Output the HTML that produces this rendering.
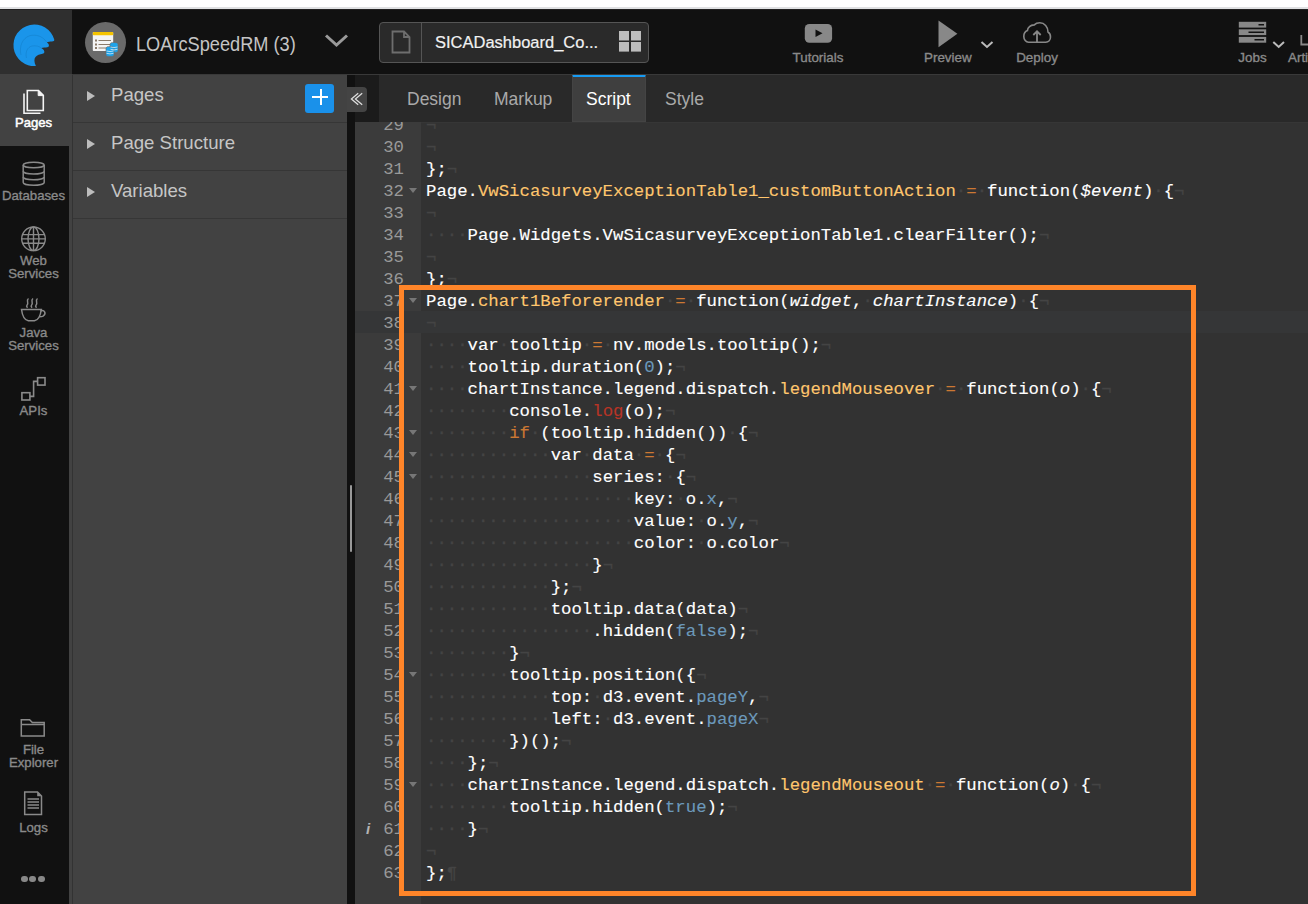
<!DOCTYPE html>
<html><head><meta charset="utf-8"><style>
*{box-sizing:border-box;margin:0;padding:0}
html,body{width:1308px;height:904px;overflow:hidden;background:#111;font-family:"Liberation Sans",sans-serif;position:relative}
.abs{position:absolute}
#topw{left:0;top:0;width:1308px;height:7px;background:#fff}
#topg{left:0;top:7px;width:1308px;height:2px;background:#e0e1e3}
#topd{left:0;top:9px;width:1308px;height:1px;background:#222}
#hdr{left:0;top:10px;width:1308px;height:64px;background:#111}
#logoarea{left:0;top:10px;width:72px;height:64px;background:#2f2f2f}
#nav{left:0;top:74px;width:69px;height:830px;background:#111}
#navstrip{left:69px;top:74px;width:3px;height:830px;background:#424242}
#navact{left:0;top:74px;width:72px;height:72px;background:#424242}
#navline{left:72px;top:74px;width:1px;height:830px;background:#333}
#panel{left:73px;top:74px;width:274px;height:830px;background:#424242}
.prow{position:absolute;left:73px;width:274px;height:48px}
.pdiv{position:absolute;left:73px;width:274px;height:1px;background:#363636}
.ptri{position:absolute;left:87px;width:0;height:0;border-left:8px solid #bdbdbd;border-top:5px solid transparent;border-bottom:5px solid transparent}
.ptxt{position:absolute;left:111px;color:#c6c6c6;font-size:18.6px;line-height:22px;white-space:nowrap}
#dstrip{left:347px;top:74px;width:8px;height:830px;background:#111}
#handle{left:350px;top:485px;width:2px;height:67px;background:#999;border-radius:1px}
#tabbar{left:355px;top:74px;width:953px;height:48px;background:#292929}
#tabdark{left:355px;top:74px;width:24px;height:48px;background:#1b1b1b}
#collapse{left:347px;top:87px;width:20px;height:25px;background:#444;border-radius:0 4px 4px 0}
.tab{position:absolute;top:75px;height:48px;font-size:19px;line-height:48px;color:#a9a9a9;transform:scaleX(0.921);transform-origin:0 50%;white-space:nowrap}
#tabact{left:572px;top:74px;width:74px;height:48px;background:#3f3f3f;border-top:3px solid #179bf3;border-left:1px solid #444;border-right:1px solid #444;border-bottom:1px solid #444}
#gutter{left:355px;top:122px;width:66px;height:782px;background:#3b3b3b;overflow:hidden}
#code{left:421px;top:122px;width:887px;height:782px;background:#323232;overflow:hidden}
#activeg{left:0;top:189px;width:66px;height:22px;background:#353637}
#activec{left:0;top:189px;width:887px;height:22px;background:#353637}
.lines{position:absolute;left:0;top:-122px;width:100%;height:904px}
.ln{position:absolute;left:5px;margin-top:2px;-webkit-text-stroke:0.12px currentColor;height:22px;line-height:22px;font-family:"Liberation Mono",monospace;font-size:17.32px;white-space:pre;color:#fff}
.gn{position:absolute;right:17px;margin-top:2px;height:22px;line-height:22px;font-family:"Liberation Mono",monospace;font-size:17.32px;color:#999;white-space:pre}
.fold{position:absolute;left:54px;width:0;height:0;margin-top:9px;border-top:5px solid #777;border-left:4px solid transparent;border-right:4px solid transparent}
.w{color:#fff}
.fn{color:#FFC66D}
.kw{color:#CC7833}
.c{color:#6C99BB}
.sf{color:#B83426}
.p{font-style:italic;color:#fff}
.inv{color:#444;-webkit-text-stroke:0.35px currentColor;position:relative;top:-1px}
#obox{left:399px;top:285px;width:797px;height:611px;border:5px solid #ff8529}

#appcirc{left:85px;top:22px;width:41px;height:41px;border-radius:50%;background:#6a6a6a}
#appname{left:136px;top:31px;font-size:19.4px;line-height:26px;color:#c4c4c4;transform:scaleX(0.938);transform-origin:0 50%;white-space:nowrap}
#filebox{left:379px;top:22px;width:270px;height:41px;border:1px solid #555;border-radius:4px;background:#2a2a2a}
#filediv{left:421px;top:23px;width:1px;height:39px;background:#555}
#filename{left:435px;top:29.5px;-webkit-text-stroke:0.2px currentColor;font-size:17.4px;line-height:24px;color:#f2f2f2;transform:scaleX(0.948);transform-origin:0 50%;white-space:nowrap}
.hlbl{top:49px;font-size:13.4px;line-height:18px;-webkit-text-stroke:0.35px currentColor;color:#8a8a8a;text-align:center;white-space:nowrap}

#plusbtn{left:305px;top:84px;width:29px;height:29px;border-radius:3px;background:#1a91ea}
.navlbl{left:0;width:67px;text-align:center;font-size:13.2px;-webkit-text-stroke:0.35px currentColor;line-height:16px;color:#8a8a8a;margin-top:0px;white-space:nowrap}
.dot{top:875.7px;width:6.8px;height:6.8px;border-radius:50%;background:#888}
.info{position:absolute;left:11px;font-family:"Liberation Sans",sans-serif;font-style:italic;font-weight:bold;font-size:15px;line-height:14px;color:#b4b4b4}
#codeline{left:421px;top:122px;width:887px;height:1px;background:#363636}
.eol{color:#444;-webkit-text-stroke:0.3px currentColor}

</style></head><body>
<div class="abs" id="topw"></div>
<div class="abs" id="topg"></div>
<div class="abs" id="topd"></div>
<div class="abs" id="hdr"></div>
<div class="abs" id="logoarea"></div>
<svg class="abs" style="left:0;top:10px" width="72" height="64" viewBox="0 10 72 64">
<path fill="#1a95ea" d="M35.9,66 A20.8,20.8 0 1 1 54.3,39.8 C54.4,41 53.5,41.3 52,41.4 C50,41.5 48,41.7 46.8,42.2 C48,43 48.9,44.2 48.9,45.5 C48.9,46.6 48.3,47.1 47.3,47.3 C45.5,47.6 43,47.7 41.3,48.1 C42.8,49 44,50 44.3,51.4 C44.5,52.8 43.8,53.4 42.5,53.8 C40,54.3 37,55.2 35.5,57 C34,58.8 34,62 35.9,66 Z"/>
<path d="M21,55 C19,47 22,38 30,35.6 C36,34.5 42,35.5 46.8,42.2 M26.5,58 C25,52 27.5,47 32,46 C36,45.5 39,46 41.3,48.1" fill="none" stroke="#0b5f9c" stroke-width="0.8" opacity="0.28"/>
</svg>
<div class="abs" id="appcirc"></div>
<svg class="abs" style="left:85px;top:22px" width="42" height="42" viewBox="85 22 42 42">
<rect x="92.8" y="32" width="20.4" height="19" rx="0.8" fill="#f4f4f4"/>
<rect x="92.8" y="32" width="20.4" height="3.3" rx="0.8" fill="#f5c400"/>
<rect x="95" y="39.5" width="2" height="2" fill="#8a7a6a"/><rect x="98.5" y="40" width="12.5" height="1" fill="#8a7a6a"/>
<rect x="95" y="43.5" width="2" height="2" fill="#8a7a6a"/><rect x="98.5" y="44" width="12.5" height="1" fill="#8a7a6a"/>
<rect x="95" y="47" width="2" height="2" fill="#8a7a6a"/><rect x="98.5" y="47.5" width="12.5" height="1" fill="#8a7a6a"/>
<g fill="#1ea3ea" stroke="#6a6a6a" stroke-width="0.6">
<path d="M110,44 a4,1.6 0 0 1 8,0 v7 a4,1.6 0 0 1 -8,0 z"/>
<path d="M106,48 a4,1.6 0 0 1 8,0 v7 a4,1.6 0 0 1 -8,0 z"/>
</g>
<g stroke="#e8f6ff" stroke-width="0.7" fill="none">
<path d="M110.5,47 q3.5,1.2 7,0 M110.5,49.3 q3.5,1.2 7,0"/>
<path d="M106.5,51 q3.5,1.2 7,0 M106.5,53.3 q3.5,1.2 7,0"/>
</g>
</svg>
<div class="abs" id="appname">LOArcSpeedRM (3)</div>
<svg class="abs" style="left:322px;top:30px" width="30" height="20" viewBox="322 30 30 20"><path d="M326,35.5 L336.5,45 L347,35.5" fill="none" stroke="#9a9a9a" stroke-width="3"/></svg>
<div class="abs" id="filebox"></div>
<div class="abs" id="filediv"></div>
<svg class="abs" style="left:388px;top:28px" width="26" height="30" viewBox="388 28 26 30"><path d="M392.5,31.5 H404 L409.5,37 V52.5 H392.5 Z M404,31.5 V37 H409.5" fill="none" stroke="#6e6e6e" stroke-width="1.8"/></svg>
<div class="abs" id="filename">SICADashboard_Co...</div>
<svg class="abs" style="left:615px;top:28px" width="30" height="28" viewBox="615 28 30 28"><g fill="#bdbdbd"><rect x="619" y="31" width="10" height="9.5"/><rect x="631" y="31" width="10" height="9.5"/><rect x="619" y="42" width="10" height="9.6"/><rect x="631" y="42" width="10" height="9.6"/></g></svg>
<svg class="abs" style="left:800px;top:20px" width="40" height="26" viewBox="800 20 40 26"><rect x="804.8" y="24" width="27.3" height="18.7" rx="4.5" fill="#888"/><path d="M815.5,29.5 L822.5,33.3 L815.5,37.1 Z" fill="#111"/></svg>
<div class="abs hlbl" style="left:792px;width:52px">Tutorials</div>
<svg class="abs" style="left:934px;top:18px" width="28" height="32" viewBox="934 18 28 32"><path d="M938.5,20.5 L957.4,33.8 L938.5,47.2 Z" fill="#888"/></svg>
<svg class="abs" style="left:978px;top:38px" width="18" height="13" viewBox="978 38 18 13"><path d="M981.5,42 L987,47 L992.5,42" fill="none" stroke="#bbb" stroke-width="2"/></svg>
<div class="abs hlbl" style="left:924px;width:47px">Preview</div>
<svg class="abs" style="left:1018px;top:18px" width="38" height="30" viewBox="1018 18 38 30"><path d="M1028.5,42.2 H1045.8 C1048.5,42.2 1050.5,39.8 1050.5,37 C1050.5,34.5 1049.5,32.8 1048,32 C1048,27 1044.5,22.8 1039.8,22.8 C1037.3,22.8 1035.5,23.6 1034.3,24.9 C1032.8,25 1030.8,25.5 1029.5,26.7 C1028.2,27.8 1027.5,29 1027.4,30.6 C1025,31.6 1023.8,33.8 1023.8,36.4 C1023.8,39.5 1026,42.2 1028.5,42.2 Z" fill="none" stroke="#888" stroke-width="1.6"/><path d="M1037,42.2 V31.5 M1033.3,35 L1037,31.3 L1040.7,35" fill="none" stroke="#888" stroke-width="1.8"/></svg>
<div class="abs hlbl" style="left:1016px;width:42px">Deploy</div>
<svg class="abs" style="left:1236px;top:18px" width="34" height="30" viewBox="1236 18 34 30"><g fill="#888"><rect x="1238.8" y="21.8" width="27.4" height="5.8"/><rect x="1238.8" y="29.3" width="27.4" height="5.8"/><rect x="1238.8" y="36.9" width="27.4" height="5.8"/></g><g fill="#111"><rect x="1258.5" y="24" width="5.5" height="1.5"/><rect x="1248.5" y="31.5" width="15.5" height="1.5"/><rect x="1254.5" y="39" width="9.5" height="1.5"/></g></svg>
<svg class="abs" style="left:1270px;top:38px" width="18" height="13" viewBox="1270 38 18 13"><path d="M1273.3,42 L1278.7,47 L1284,42" fill="none" stroke="#bbb" stroke-width="2"/></svg>
<div class="abs hlbl" style="left:1237px;width:31px">Jobs</div>
<svg class="abs" style="left:1296px;top:30px" width="12" height="20" viewBox="1296 30 12 20"><path d="M1301.3,35 V44.5 H1308" fill="none" stroke="#888" stroke-width="1.8"/></svg>
<div class="abs hlbl" style="left:1288px;text-align:left;width:60px">Artifacts</div>
<div class="abs" id="nav"></div>
<div class="abs" id="navstrip"></div>
<div class="abs" id="navact"></div>
<svg class="abs" style="left:15px;top:85px" width="40" height="32" viewBox="15 85 40 32"><path d="M24,93.5 V113.3 H40.5" fill="none" stroke="#f4f4f4" stroke-width="1.6"/><path d="M27.3,90.5 H38.5 L43.3,95.3 V110.5 H27.3 Z" fill="#424242" stroke="#f4f4f4" stroke-width="1.6"/><path d="M38.2,90.5 V95.6 H43.3" fill="#f4f4f4" stroke="#f4f4f4" stroke-width="1"/></svg>
<div class="abs navlbl" style="top:115px;color:#fff;font-size:13.1px;-webkit-text-stroke:0.5px #fff">Pages</div>
<svg class="abs" style="left:18px;top:158px" width="32" height="32" viewBox="18 158 32 32"><g fill="none" stroke="#8a8a8a" stroke-width="1.5"><ellipse cx="33.7" cy="165" rx="10.5" ry="2.8"/><path d="M23.2,165 V182.5 A10.5,2.8 0 0 0 44.2,182.5 V165"/><path d="M23.2,171.2 A10.5,2.8 0 0 0 44.2,171.2 M23.2,177 A10.5,2.8 0 0 0 44.2,177"/></g></svg>
<div class="abs navlbl" style="top:188px">Databases</div>
<svg class="abs" style="left:18px;top:223px" width="32" height="32" viewBox="18 223 32 32"><g fill="none" stroke="#8a8a8a" stroke-width="1.4"><circle cx="33.5" cy="238.8" r="11.8"/><ellipse cx="33.5" cy="238.8" rx="5.5" ry="11.8"/><path d="M33.5,227 V250.6 M22,234.6 H45 M21.7,238.9 H45.3 M22,243.3 H45"/></g></svg>
<div class="abs navlbl" style="top:253px">Web</div>
<div class="abs navlbl" style="top:266px">Services</div>
<svg class="abs" style="left:18px;top:295px" width="32" height="30" viewBox="18 295 32 30"><g fill="none" stroke="#8a8a8a" stroke-width="1.5"><path d="M21.5,309.5 H41.3 C40.5,315.5 38,320.2 34.5,320.8 H28.3 C24.8,320.2 22.3,315.5 21.5,309.5 Z"/><path d="M40.5,311 C44.5,309.5 46.5,313 43.5,315.8 C42.5,316.5 41,316.8 39.3,316.8"/><path d="M28.5,298.5 C25.5,300.5 29.5,303 27.0,305.3 C26.0,306.3 27.0,307.2 27.5,307.8 M33,298.5 C30,300.5 34,303 31.5,305.3 C30.5,306.3 31.5,307.2 32,307.8 M37.5,298.5 C34.5,300.5 38.5,303 36.0,305.3 C35.0,306.3 36.0,307.2 36.5,307.8"/></g></svg>
<div class="abs navlbl" style="top:324.5px">Java</div>
<div class="abs navlbl" style="top:338px">Services</div>
<svg class="abs" style="left:18px;top:373px" width="32" height="32" viewBox="18 373 32 32"><g fill="none" stroke="#8a8a8a" stroke-width="1.6"><rect x="21.9" y="392.7" width="8" height="7.3"/><rect x="37.6" y="377.7" width="7.4" height="7.4"/><path d="M29.9,396.4 H33.6 V381.4 H37.6"/></g></svg>
<div class="abs navlbl" style="top:403px">APIs</div>
<svg class="abs" style="left:18px;top:715px" width="32" height="26" viewBox="18 715 32 26"><g fill="none" stroke="#8a8a8a" stroke-width="1.5"><path d="M21.3,736 V719.7 H29.6 L32.3,722.5 H44.2 V736 Z M21.3,724.5 H44.2"/></g></svg>
<div class="abs navlbl" style="top:742px">File</div>
<div class="abs navlbl" style="top:755px">Explorer</div>
<svg class="abs" style="left:18px;top:788px" width="32" height="30" viewBox="18 788 32 30"><g fill="none" stroke="#8a8a8a" stroke-width="1.5"><path d="M24.7,792 H37.5 L41.5,796 V814.5 H24.7 Z"/><path d="M27.5,799 H39 M27.5,802 H39 M27.5,805 H39 M27.5,808 H39"/></g><path d="M37.2,792 V796.3 H41.5 Z" fill="#8a8a8a"/></svg>
<div class="abs navlbl" style="top:820px">Logs</div>
<div class="abs dot" style="left:20.8px"></div><div class="abs dot" style="left:29.3px"></div><div class="abs dot" style="left:37.8px"></div>

<div class="abs" id="navline"></div>
<div class="abs" id="panel"></div>
<div class="pdiv" style="top:122px"></div>
<div class="pdiv" style="top:170px"></div>
<div class="pdiv" style="top:218px"></div>
<div class="ptri" style="top:91px"></div>
<div class="ptri" style="top:139px"></div>
<div class="ptri" style="top:187px"></div>
<div class="ptxt" style="top:84px">Pages</div>
<div class="ptxt" style="top:132px">Page Structure</div>
<div class="ptxt" style="top:180px">Variables</div>
<div class="abs" id="plusbtn"></div>
<div class="abs" style="left:312px;top:96px;width:16px;height:2px;background:#fff"></div>
<div class="abs" style="left:319.5px;top:89px;width:2px;height:16px;background:#fff"></div>
<div class="abs" id="dstrip"></div>
<div class="abs" id="handle"></div>
<div class="abs" id="tabbar"></div>
<div class="abs" id="tabdark"></div>
<div class="abs" id="collapse"></div>
<svg class="abs" style="left:347px;top:87px" width="20" height="25" viewBox="347 87 20 25"><path d="M358.2,93.2 L351.4,99 L358.2,104.8 M362.2,93.2 L355.4,99 L362.2,104.8" fill="none" stroke="#e0e0e0" stroke-width="1.25"/></svg>
<div class="abs" id="tabact"></div>
<div class="tab" style="left:407px">Design</div>
<div class="tab" style="left:494px">Markup</div>
<div class="tab" style="left:586px;color:#fff">Script</div>
<div class="tab" style="left:665px">Style</div>
<div class="abs" id="gutter"><div class="abs" id="activeg"></div><div class="lines">
<div class="gn" style="top:113px">29</div>
<div class="gn" style="top:135px">30</div>
<div class="gn" style="top:157px">31</div>
<div class="gn" style="top:179px">32</div>
<div class="fold" style="top:179px"></div>
<div class="gn" style="top:201px">33</div>
<div class="gn" style="top:223px">34</div>
<div class="gn" style="top:245px">35</div>
<div class="gn" style="top:267px">36</div>
<div class="gn" style="top:289px">37</div>
<div class="fold" style="top:289px"></div>
<div class="gn" style="top:311px">38</div>
<div class="gn" style="top:333px">39</div>
<div class="gn" style="top:355px">40</div>
<div class="gn" style="top:377px">41</div>
<div class="fold" style="top:377px"></div>
<div class="gn" style="top:399px">42</div>
<div class="gn" style="top:421px">43</div>
<div class="fold" style="top:421px"></div>
<div class="gn" style="top:443px">44</div>
<div class="fold" style="top:443px"></div>
<div class="gn" style="top:465px">45</div>
<div class="fold" style="top:465px"></div>
<div class="gn" style="top:487px">46</div>
<div class="gn" style="top:509px">47</div>
<div class="gn" style="top:531px">48</div>
<div class="gn" style="top:553px">49</div>
<div class="gn" style="top:575px">50</div>
<div class="gn" style="top:597px">51</div>
<div class="gn" style="top:619px">52</div>
<div class="gn" style="top:641px">53</div>
<div class="gn" style="top:663px">54</div>
<div class="fold" style="top:663px"></div>
<div class="gn" style="top:685px">55</div>
<div class="gn" style="top:707px">56</div>
<div class="gn" style="top:729px">57</div>
<div class="gn" style="top:751px">58</div>
<div class="gn" style="top:773px">59</div>
<div class="fold" style="top:773px"></div>
<div class="gn" style="top:795px">60</div>
<div class="gn" style="top:817px">61</div>
<div class="gn" style="top:839px">62</div>
<div class="gn" style="top:861px">63</div>
<div class="info" style="top:821.5px">i</div>
</div></div>
<div class="abs" id="code"><div class="abs" id="activec"></div><div class="lines">
<div class="ln" style="top:113px"><span class="eol">¬</span></div>
<div class="ln" style="top:135px"><span class="eol">¬</span></div>
<div class="ln" style="top:157px"><span class="w">};</span><span class="eol">¬</span></div>
<div class="ln" style="top:179px"><span class="w">Page.</span><span class="fn">VwSicasurveyExceptionTable1_customButtonAction</span><span class="inv">·</span><span class="kw">=</span><span class="inv">·</span><span class="w">function(</span><span class="p">$event</span><span class="w">)</span><span class="inv">·</span><span class="w">{</span><span class="eol">¬</span></div>
<div class="ln" style="top:201px"><span class="eol">¬</span></div>
<div class="ln" style="top:223px"><span class="inv">·</span><span class="inv">·</span><span class="inv">·</span><span class="inv">·</span><span class="w">Page.Widgets.VwSicasurveyExceptionTable1.clearFilter();</span><span class="eol">¬</span></div>
<div class="ln" style="top:245px"><span class="eol">¬</span></div>
<div class="ln" style="top:267px"><span class="w">};</span><span class="eol">¬</span></div>
<div class="ln" style="top:289px"><span class="w">Page.</span><span class="fn">chart1Beforerender</span><span class="inv">·</span><span class="kw">=</span><span class="inv">·</span><span class="w">function(</span><span class="p">widget</span><span class="w">,</span><span class="inv">·</span><span class="p">chartInstance</span><span class="w">)</span><span class="inv">·</span><span class="w">{</span><span class="eol">¬</span></div>
<div class="ln" style="top:311px"><span class="eol">¬</span></div>
<div class="ln" style="top:333px"><span class="inv">·</span><span class="inv">·</span><span class="inv">·</span><span class="inv">·</span><span class="w">var</span><span class="inv">·</span><span class="w">tooltip</span><span class="inv">·</span><span class="kw">=</span><span class="inv">·</span><span class="w">nv.models.tooltip();</span><span class="eol">¬</span></div>
<div class="ln" style="top:355px"><span class="inv">·</span><span class="inv">·</span><span class="inv">·</span><span class="inv">·</span><span class="w">tooltip.duration(</span><span class="c">0</span><span class="w">);</span><span class="eol">¬</span></div>
<div class="ln" style="top:377px"><span class="inv">·</span><span class="inv">·</span><span class="inv">·</span><span class="inv">·</span><span class="w">chartInstance.legend.dispatch.</span><span class="fn">legendMouseover</span><span class="inv">·</span><span class="kw">=</span><span class="inv">·</span><span class="w">function(</span><span class="p">o</span><span class="w">)</span><span class="inv">·</span><span class="w">{</span><span class="eol">¬</span></div>
<div class="ln" style="top:399px"><span class="inv">·</span><span class="inv">·</span><span class="inv">·</span><span class="inv">·</span><span class="inv">·</span><span class="inv">·</span><span class="inv">·</span><span class="inv">·</span><span class="w">console.</span><span class="sf">log</span><span class="w">(o);</span><span class="eol">¬</span></div>
<div class="ln" style="top:421px"><span class="inv">·</span><span class="inv">·</span><span class="inv">·</span><span class="inv">·</span><span class="inv">·</span><span class="inv">·</span><span class="inv">·</span><span class="inv">·</span><span class="kw">if</span><span class="inv">·</span><span class="w">(tooltip.hidden())</span><span class="inv">·</span><span class="w">{</span><span class="eol">¬</span></div>
<div class="ln" style="top:443px"><span class="inv">·</span><span class="inv">·</span><span class="inv">·</span><span class="inv">·</span><span class="inv">·</span><span class="inv">·</span><span class="inv">·</span><span class="inv">·</span><span class="inv">·</span><span class="inv">·</span><span class="inv">·</span><span class="inv">·</span><span class="w">var</span><span class="inv">·</span><span class="w">data</span><span class="inv">·</span><span class="kw">=</span><span class="inv">·</span><span class="w">{</span><span class="eol">¬</span></div>
<div class="ln" style="top:465px"><span class="inv">·</span><span class="inv">·</span><span class="inv">·</span><span class="inv">·</span><span class="inv">·</span><span class="inv">·</span><span class="inv">·</span><span class="inv">·</span><span class="inv">·</span><span class="inv">·</span><span class="inv">·</span><span class="inv">·</span><span class="inv">·</span><span class="inv">·</span><span class="inv">·</span><span class="inv">·</span><span class="w">series:</span><span class="inv">·</span><span class="w">{</span><span class="eol">¬</span></div>
<div class="ln" style="top:487px"><span class="inv">·</span><span class="inv">·</span><span class="inv">·</span><span class="inv">·</span><span class="inv">·</span><span class="inv">·</span><span class="inv">·</span><span class="inv">·</span><span class="inv">·</span><span class="inv">·</span><span class="inv">·</span><span class="inv">·</span><span class="inv">·</span><span class="inv">·</span><span class="inv">·</span><span class="inv">·</span><span class="inv">·</span><span class="inv">·</span><span class="inv">·</span><span class="inv">·</span><span class="w">key:</span><span class="inv">·</span><span class="w">o.</span><span class="c">x</span><span class="w">,</span><span class="eol">¬</span></div>
<div class="ln" style="top:509px"><span class="inv">·</span><span class="inv">·</span><span class="inv">·</span><span class="inv">·</span><span class="inv">·</span><span class="inv">·</span><span class="inv">·</span><span class="inv">·</span><span class="inv">·</span><span class="inv">·</span><span class="inv">·</span><span class="inv">·</span><span class="inv">·</span><span class="inv">·</span><span class="inv">·</span><span class="inv">·</span><span class="inv">·</span><span class="inv">·</span><span class="inv">·</span><span class="inv">·</span><span class="w">value:</span><span class="inv">·</span><span class="w">o.</span><span class="c">y</span><span class="w">,</span><span class="eol">¬</span></div>
<div class="ln" style="top:531px"><span class="inv">·</span><span class="inv">·</span><span class="inv">·</span><span class="inv">·</span><span class="inv">·</span><span class="inv">·</span><span class="inv">·</span><span class="inv">·</span><span class="inv">·</span><span class="inv">·</span><span class="inv">·</span><span class="inv">·</span><span class="inv">·</span><span class="inv">·</span><span class="inv">·</span><span class="inv">·</span><span class="inv">·</span><span class="inv">·</span><span class="inv">·</span><span class="inv">·</span><span class="w">color:</span><span class="inv">·</span><span class="w">o.color</span><span class="eol">¬</span></div>
<div class="ln" style="top:553px"><span class="inv">·</span><span class="inv">·</span><span class="inv">·</span><span class="inv">·</span><span class="inv">·</span><span class="inv">·</span><span class="inv">·</span><span class="inv">·</span><span class="inv">·</span><span class="inv">·</span><span class="inv">·</span><span class="inv">·</span><span class="inv">·</span><span class="inv">·</span><span class="inv">·</span><span class="inv">·</span><span class="w">}</span><span class="eol">¬</span></div>
<div class="ln" style="top:575px"><span class="inv">·</span><span class="inv">·</span><span class="inv">·</span><span class="inv">·</span><span class="inv">·</span><span class="inv">·</span><span class="inv">·</span><span class="inv">·</span><span class="inv">·</span><span class="inv">·</span><span class="inv">·</span><span class="inv">·</span><span class="w">};</span><span class="eol">¬</span></div>
<div class="ln" style="top:597px"><span class="inv">·</span><span class="inv">·</span><span class="inv">·</span><span class="inv">·</span><span class="inv">·</span><span class="inv">·</span><span class="inv">·</span><span class="inv">·</span><span class="inv">·</span><span class="inv">·</span><span class="inv">·</span><span class="inv">·</span><span class="w">tooltip.data(data)</span><span class="eol">¬</span></div>
<div class="ln" style="top:619px"><span class="inv">·</span><span class="inv">·</span><span class="inv">·</span><span class="inv">·</span><span class="inv">·</span><span class="inv">·</span><span class="inv">·</span><span class="inv">·</span><span class="inv">·</span><span class="inv">·</span><span class="inv">·</span><span class="inv">·</span><span class="inv">·</span><span class="inv">·</span><span class="inv">·</span><span class="inv">·</span><span class="w">.hidden(</span><span class="c">false</span><span class="w">);</span><span class="eol">¬</span></div>
<div class="ln" style="top:641px"><span class="inv">·</span><span class="inv">·</span><span class="inv">·</span><span class="inv">·</span><span class="inv">·</span><span class="inv">·</span><span class="inv">·</span><span class="inv">·</span><span class="w">}</span><span class="eol">¬</span></div>
<div class="ln" style="top:663px"><span class="inv">·</span><span class="inv">·</span><span class="inv">·</span><span class="inv">·</span><span class="inv">·</span><span class="inv">·</span><span class="inv">·</span><span class="inv">·</span><span class="w">tooltip.position({</span><span class="eol">¬</span></div>
<div class="ln" style="top:685px"><span class="inv">·</span><span class="inv">·</span><span class="inv">·</span><span class="inv">·</span><span class="inv">·</span><span class="inv">·</span><span class="inv">·</span><span class="inv">·</span><span class="inv">·</span><span class="inv">·</span><span class="inv">·</span><span class="inv">·</span><span class="w">top:</span><span class="inv">·</span><span class="w">d3.event.</span><span class="c">pageY</span><span class="w">,</span><span class="eol">¬</span></div>
<div class="ln" style="top:707px"><span class="inv">·</span><span class="inv">·</span><span class="inv">·</span><span class="inv">·</span><span class="inv">·</span><span class="inv">·</span><span class="inv">·</span><span class="inv">·</span><span class="inv">·</span><span class="inv">·</span><span class="inv">·</span><span class="inv">·</span><span class="w">left:</span><span class="inv">·</span><span class="w">d3.event.</span><span class="c">pageX</span><span class="eol">¬</span></div>
<div class="ln" style="top:729px"><span class="inv">·</span><span class="inv">·</span><span class="inv">·</span><span class="inv">·</span><span class="inv">·</span><span class="inv">·</span><span class="inv">·</span><span class="inv">·</span><span class="w">})();</span><span class="eol">¬</span></div>
<div class="ln" style="top:751px"><span class="inv">·</span><span class="inv">·</span><span class="inv">·</span><span class="inv">·</span><span class="w">};</span><span class="eol">¬</span></div>
<div class="ln" style="top:773px"><span class="inv">·</span><span class="inv">·</span><span class="inv">·</span><span class="inv">·</span><span class="w">chartInstance.legend.dispatch.</span><span class="fn">legendMouseout</span><span class="inv">·</span><span class="kw">=</span><span class="inv">·</span><span class="w">function(</span><span class="p">o</span><span class="w">)</span><span class="inv">·</span><span class="w">{</span><span class="eol">¬</span></div>
<div class="ln" style="top:795px"><span class="inv">·</span><span class="inv">·</span><span class="inv">·</span><span class="inv">·</span><span class="inv">·</span><span class="inv">·</span><span class="inv">·</span><span class="inv">·</span><span class="w">tooltip.hidden(</span><span class="c">true</span><span class="w">);</span><span class="eol">¬</span></div>
<div class="ln" style="top:817px"><span class="inv">·</span><span class="inv">·</span><span class="inv">·</span><span class="inv">·</span><span class="w">}</span><span class="eol">¬</span></div>
<div class="ln" style="top:839px"><span class="eol">¬</span></div>
<div class="ln" style="top:861px"><span class="w">};</span><span class="eol">¶</span></div>
</div></div>
<div class="abs" id="codeline"></div>
<div class="abs" style="left:72px;top:74px;width:1236px;height:1px;background:#393939"></div>
<div class="abs" id="obox"></div>

</body></html>
